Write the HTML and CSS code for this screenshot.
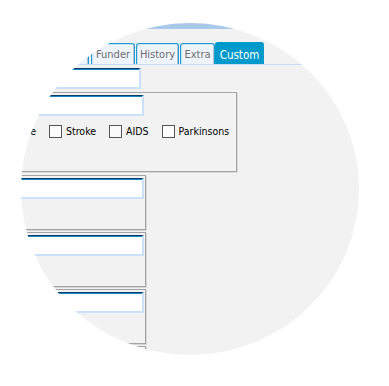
FILE: index.html
```html
<!DOCTYPE html>
<html>
<head>
<meta charset="utf-8">
<title>Custom</title>
<link rel="stylesheet" href="styles.css">
</head>
<body>
<div class="stage">
  <div class="strip"></div>
  <div class="tabs">
    <div class="tab tab-prev">Contact</div>
    <div class="tab tab-funder">Funder</div>
    <div class="tab tab-history">History</div>
    <div class="tab tab-extra">Extra</div>
    <div class="tab tab-custom active">Custom</div>
  </div>
  <div class="content">
    <div class="field field-top"></div>
    <div class="group">
      <div class="field field-wide"></div>
      <div class="checks">
        <label class="check check-first"><span class="box"></span>Disease</label>
        <label class="check"><span class="box"></span>Stroke</label>
        <label class="check"><span class="box"></span>AIDS</label>
        <label class="check"><span class="box"></span>Parkinsons</label>
      </div>
    </div>
    <div class="panel"><div class="field field-wide"></div></div>
    <div class="panel"><div class="field field-wide"></div></div>
    <div class="panel"><div class="field field-wide"></div></div>
    <div class="panel"><div class="field field-wide"></div></div>
  </div>
</div>
</body>
</html>
```

FILE: styles.css
```css
html, body {
  margin: 0;
  padding: 0;
  background: #ffffff;
}

body {
  font-family: "DejaVu Sans Condensed", "DejaVu Sans", sans-serif;
  font-stretch: condensed;
  font-size: 10.5px;
  color: #000;
  height: 386px;
  overflow: hidden;
}

.stage {
  margin: 23px 0 0 21px;
  width: 338px;
  height: 332px;
  border-radius: 50%;
  overflow: hidden;
  background: #f2f2f2;
}

.strip {
  height: 6px;
  background: #a9c9ea;
}

.tabs {
  margin-top: 13px;
  height: 22px;
  padding-left: 7px;
  display: flex;
  align-items: flex-end;
  border-bottom: 1px solid #c8ddf5;
}

.tab {
  box-sizing: border-box;
  height: 21px;
  display: flex;
  align-items: center;
  justify-content: center;
  white-space: nowrap;
  font-size: 11px;
  color: #6e6e6e;
  background: #eef4fc;
  border: 1px solid #1e9bd3;
  border-bottom: none;
  border-radius: 3px 3px 0 0;
  box-shadow: inset 1px 1px 0 #c4e2f3, inset -1px 0 0 #b9c4cc;
  padding-top: 1px;
}

.tab-prev { width: 61px; }
.tab-funder { width: 44px; margin-left: 2px; }
.tab-history { width: 43px; margin-left: 1px; }
.tab-extra { width: 35px; margin-left: 1px; }

.tab-custom {
  width: 49px;
  height: 22px;
  font-size: 11.5px;
  color: #ffffff;
  background: #0099cc;
  border-color: #0099cc;
  box-shadow: none;
  padding-top: 2px;
}

.content {
  margin-left: -30px;
  display: flex;
  flex-direction: column;
  align-items: flex-start;
}

.field {
  box-sizing: border-box;
  height: 21px;
  background: #ffffff;
  border: 2px solid #cbe0fa;
  border-top: 1px solid #0a3d6b;
  box-shadow: inset 0 1px 0 #1a86c4;
}

.field-top {
  width: 150px;
  margin-top: 3px;
}

.group {
  box-sizing: border-box;
  width: 246px;
  height: 80px;
  margin-top: 3px;
  border: 1px solid #a4a4a4;
  box-shadow: 1px 1px 0 #dadada;
  padding-top: 2px;
}

.field-wide {
  width: 152px;
}

.checks {
  margin-top: 9px;
  height: 13px;
  display: flex;
  align-items: center;
  gap: 13px;
}

.check {
  display: flex;
  align-items: center;
  gap: 4px;
  white-space: nowrap;
  line-height: 13px;
}

.check-first {
  width: 44px;
  justify-content: flex-end;
}

.box {
  box-sizing: border-box;
  flex: none;
  width: 13px;
  height: 13px;
  background: #fbfbfb;
  border: 1px solid #555555;
}

.panel {
  box-sizing: border-box;
  width: 155px;
  height: 55px;
  margin-top: 2px;
  border: 1px solid #a4a4a4;
  box-shadow: 1px 1px 0 #d6d6d6;
  padding-top: 2px;
}

.group + .panel {
  margin-top: 3px;
}
```
